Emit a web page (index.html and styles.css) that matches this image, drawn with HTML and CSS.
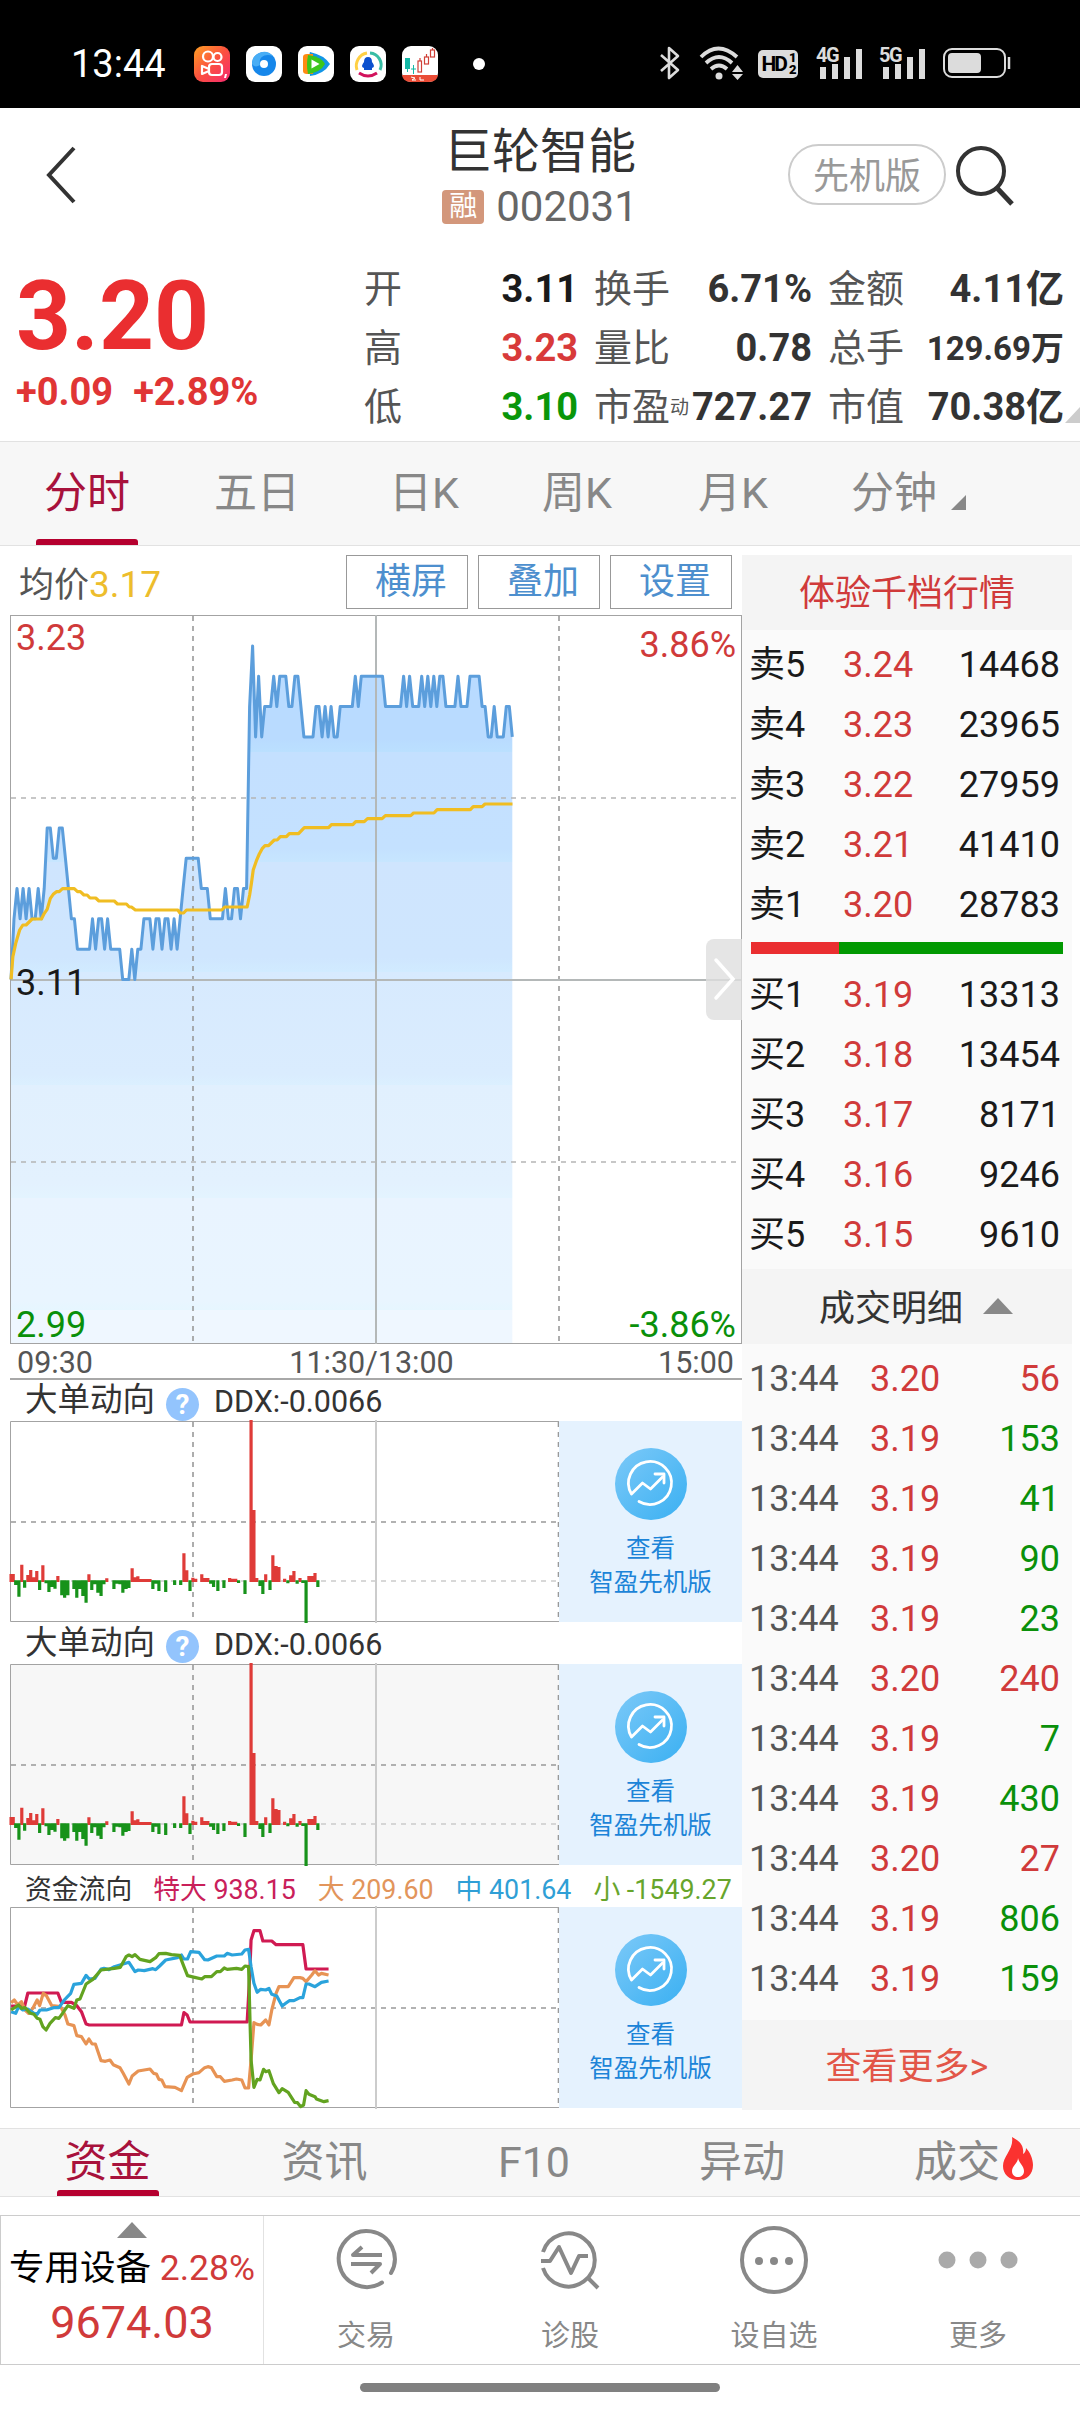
FILE: index.html
```html
<!DOCTYPE html>
<html lang="zh-CN">
<head>
  <meta charset="UTF-8" />
  <meta name="viewport" content="width=device-width, initial-scale=1.0"/>
  <title>巨轮智能 002031</title>
  <link rel="stylesheet" href="styles.css">
</head>
<body>
  <div class="statusbar">
    <span class="clock">13:44</span>
    <div class="apps">
      <svg viewBox="0 0 36 36"><defs><linearGradient id="ks" x1="0" y1="0" x2="1" y2="1"><stop offset="0" stop-color="#ffa023"/><stop offset=".5" stop-color="#fb5040"/><stop offset="1" stop-color="#f52a70"/></linearGradient></defs><rect width="36" height="36" rx="9" fill="url(#ks)"/><g fill="none" stroke="#fff" stroke-width="2.2"><circle cx="14" cy="10.500" r="5"/><circle cx="23.500" cy="11" r="4"/><rect x="15" y="18" width="13" height="11" rx="3"/><path d="M15 23l-7-3v8l7-3" stroke-linejoin="round"/></g><path d="M31 28l2 0-1 4h-2z" fill="#fff"/></svg>
      <svg viewBox="0 0 36 36"><rect width="36" height="36" rx="9" fill="#fff"/><circle cx="18" cy="18" r="12" fill="#1687ea"/><path d="M6 18a12 12 0 0 1 21-8c-9-3-15 2-13 9-3 2-6 2-8-1z" fill="#48adf5"/><circle cx="18" cy="18" r="4" fill="#fff"/></svg>
      <svg viewBox="0 0 36 36"><rect width="36" height="36" rx="9" fill="#fff"/><path d="M12 6q-1 0 0 24Q26 28 32 18 26 9 12 6z" fill="#1295e6"/><path d="M5 11q0-3 4-3h6v20H9q-4 0-4-3z" fill="#ff8a12"/><path d="M10 9q14 2 17 9-4 8-17 10-2-9 0-19z" fill="#3cc61c"/><path d="M13.500 13.500v9l8-4.500z" fill="#fff"/></svg>
      <svg viewBox="0 0 36 36"><rect width="36" height="36" rx="9" fill="#fff"/><g fill="none" stroke-width="3"><path d="M7 24a13 13 0 0 1 10-17" stroke="#ffd044"/><path d="M20 7a12 12 0 0 1 10 17" stroke="#38bda5"/><path d="M9 27q9 6 18 0" stroke="#d2125c"/></g><path d="M18 11q4 0 4 5 4 5 0 6v2h-8v-2q-4-1 0-6 0-5 4-5z" fill="#0c50ce"/></svg>
      <svg viewBox="0 0 36 36"><rect width="36" height="36" rx="9" fill="#fff"/><path d="M0 29h36q-1 7-9 7H9q-8 0-9-7z" fill="#ea4c36"/><rect x="3" y="12" width="5" height="11" fill="#14b8a6"/><path d="M5.500 23v3M11.500 19v9M9 23h5" stroke="#14b8a6" fill="none"/><g fill="#fff" stroke="#d04038" stroke-width="1.200"><path d="M18 12v3M24.500 8v3M30.500 2v2"/><rect x="16" y="15" width="3.500" height="11"/><rect x="22.500" y="11" width="4" height="7"/><rect x="28.500" y="4" width="4" height="7"/></g><path d="M9 31l4 1-3 2h4M18 31v3h4" stroke="#fff" fill="none"/></svg>
    </div>
    <i class="more-dot"></i>
    <div class="signals">
      <svg width="22" height="34" viewBox="0 0 22 34"><path d="M2 9l17 15-9 8V2l9 8L2 25" fill="none" stroke="#dcdcdc" stroke-width="2.600" stroke-linejoin="round"/></svg>
      <svg width="44" height="34" viewBox="0 0 44 34"><g fill="none" stroke="#dcdcdc" stroke-width="3.800"><path d="M2 11q17-17 36 0"/><path d="M7 17q13-12 26 0"/><path d="M12 23q8-7 16 0"/></g><circle cx="20" cy="30" r="3.500" fill="#dcdcdc"/><path d="M33 26l5.500-7 5.500 7zM33 28h11l-5.500 6z" fill="#dcdcdc"/></svg>
      <span class="hd">HD<small><b>1</b><b>2</b></small></span>
      <span class="cell"><em>4G</em><svg width="44" height="31" viewBox="0 0 44 31"><path d="M4 19v12M16 16v15M28 9v22M40 1v30" stroke="#dcdcdc" stroke-width="6"/></svg></span>
      <span class="cell"><em>5G</em><svg width="44" height="31" viewBox="0 0 44 31"><path d="M4 19v12M16 16v15M28 9v22M40 1v30" stroke="#dcdcdc" stroke-width="6"/></svg></span>
      <svg width="68" height="30" viewBox="0 0 68 30"><rect x="1" y="1" width="61" height="28" rx="8" fill="none" stroke="#dcdcdc" stroke-width="2"/><rect x="5" y="5" width="33" height="20" rx="4" fill="#dcdcdc"/><path d="M66 9v12" stroke="#dcdcdc" stroke-width="2.500"/></svg>
    </div>
  </div>

  <header class="navbar">
    <svg class="back" width="36" height="60" viewBox="0 0 36 60"><path d="M31 3L6 30l25 27" fill="none" stroke="#333" stroke-width="4"/></svg>
    <div class="name">
      <h1>巨轮智能</h1>
      <div class="code"><span class="rong">融</span>002031</div>
    </div>
    <div class="actions">
      <span class="pill">先机版</span>
      <svg width="60" height="64" viewBox="0 0 60 64"><circle cx="26" cy="27" r="23" fill="none" stroke="#333" stroke-width="4"/><path d="M42 44l15 16" stroke="#333" stroke-width="5"/></svg>
    </div>
  </header>

  <section class="quote">
    <div class="last">
      <div class="price">3.20</div>
      <div class="change"><span>+0.09</span><span>+2.89%</span></div>
    </div>
    <div class="stats">
      <div>开<b class="dark">3.11</b></div><div>换手<b>6.71%</b></div><div>金额<b>4.11亿</b></div>
      <div>高<b class="red">3.23</b></div><div>量比<b>0.78</b></div><div>总手<b class="small">129.69万</b></div>
      <div>低<b class="green">3.10</b></div><div>市盈<small>动</small><b>727.27</b></div><div>市值<b>70.38亿</b></div>
    </div>
    <i class="corner"></i>
  </section>

  <nav class="tabs period">
    <a class="active">分时</a><a>五日</a><a>日K</a><a>周K</a><a>月K</a><a class="minute">分钟<i></i></a>
  </nav>

  <main class="board">
    <div class="charts">
      <div class="toolbar">
        <span class="avg">均价<b>3.17</b></span>
        <button>横屏</button><button>叠加</button><button>设置</button>
      </div>

      <div class="main-chart">
        <svg width="732" height="729" viewBox="0 0 732 729">
          <defs>
            <linearGradient id="area" gradientUnits="userSpaceOnUse" x1="0" y1="0" x2="0" y2="729">
              <stop offset="0" stop-color="#b9dbff"/><stop offset=".17" stop-color="#b9dbff"/><stop offset=".188" stop-color="#bbe0ff"/>
              <stop offset=".188" stop-color="#c4e0ff"/><stop offset=".32" stop-color="#c4e1ff"/><stop offset=".339" stop-color="#c7e6ff"/>
              <stop offset=".339" stop-color="#cfe5fe"/><stop offset=".47" stop-color="#cfe6fe"/><stop offset=".49" stop-color="#d1ebff"/>
              <stop offset=".49" stop-color="#d7eafe"/><stop offset=".63" stop-color="#daecfe"/><stop offset=".645" stop-color="#dbf0ff"/>
              <stop offset=".645" stop-color="#e1f0fe"/><stop offset=".78" stop-color="#e3f1fe"/><stop offset=".80" stop-color="#e3f4ff"/>
              <stop offset=".80" stop-color="#e9f4ff"/><stop offset=".94" stop-color="#e9f5ff"/><stop offset=".953" stop-color="#e6f6ff"/>
              <stop offset=".953" stop-color="#eff7ff"/><stop offset="1" stop-color="#eff7ff"/>
            </linearGradient>
          </defs>
          <polygon id="priceArea" fill="url(#area)"/>
          <rect class="frame" x=".5" y=".5" width="731" height="728"/>
          <path class="dash" d="M183 1v727M549 1v727"/>
          <path class="dash light" d="M1 183h730M1 547h730"/>
          <path class="solid" d="M366 0v729M1 365h730"/>
          <polyline id="priceLine"/>
          <g transform="translate(-10 -75) scale(.35714 .33333)">
            <polyline class="line yellow" points="31,1318 36,1250 44,1210 55,1170 64,1155 73,1155 90,1137 116,1137 124,1120 132,1108 141,1075 149,1063 158,1055 166,1055 175,1046 208,1046 217,1055 225,1055 235,1065 244,1065 252,1074 268,1074 277,1083 320,1083 329,1092 354,1092 362,1101 368,1101 379,1110 498,1110 504,1119 514,1119 522,1110 621,1110 629,1101 692,1101 699,1065 704,1030 709,990 718,962 726,942 734,926 742,917 752,917 768,900 776,900 785,890 802,890 810,881 836,881 852,863 920,863 928,854 988,854 996,845 1020,845 1029,836 1070,836 1079,827 1150,827 1158,819 1215,819 1224,809 1317,809 1325,800 1350,800 1358,792 1435,792"/>
          </g>
        </svg>
        <span class="lbl high red">3.23</span><span class="lbl rise red">3.86%</span>
        <span class="lbl mid">3.11</span>
        <span class="lbl low green">2.99</span><span class="lbl fall green">-3.86%</span>
        <span class="handle"><svg width="24" height="44" viewBox="0 0 24 44"><path d="M3 3l17 19L3 41" fill="none" stroke="#fff" stroke-width="3.500" stroke-linecap="round"/></svg></span>
      </div>
      <div class="times"><span>09:30</span><span>11:30/13:00</span><span>15:00</span></div>

      <div class="sub-title big">大单动向<i class="help">?</i><span>DDX:-0.0066</span></div>
      <div class="sub">
        <svg width="549" height="201" viewBox="0 0 549 201">
          <defs>
            <g id="ddx" transform="translate(-10 -121) scale(.35714 .33333)">
              <path class="bar up" d="M31 846v-24M37 846v-24M61 846v-52M78 846v-21M86 846v-36M95 846v-14M103 846v-33M120 846v-50M162 846v-18M249 846v-23M299 846v-11M370 846v-41M378 846v-14M386 846v-17M395 846v-9M403 846v-9M412 846v-9M420 846v-9M515 846v-86M523 846v-35M540 846v-13M548 846v-10M565 846v-23M573 846v-12M582 846v-12M643 846v-12M651 846v-10M660 846v-10M703 846v-486M711 846v-216M719 846v-12M744 846v-23M764 846v-80M773 846v-48M781 846v-45M797 846v-10M814 846v-20M823 846v-33M840 846v-12M865 846v-18M873 846v-18M882 846v-27"/>
              <path class="bar down" d="M44 841v14M53 841v49M69 841v22M111 841v29M129 841v9M137 841v35M146 841v20M154 841v25M173 841v45M181 841v52M190 841v45M207 841v26M215 841v52M224 841v26M232 841v47M241 841v67M257 841v29M266 841v12M274 841v37M283 841v47M291 841v12M319 841v26M328 841v10M336 841v12M344 841v37M353 841v26M361 841v23M428 841v26M437 841v10M445 841v32M464 841v35M489 841v14M506 841v14M532 841v32M590 841v10M598 841v20M610 841v32M627 841v23M668 841v8M686 841v41M728 841v17M736 841v41M756 841v29M806 841v9M832 841v10M848 841v8M857 841v128M890 841v20"/>
            </g>
            <g id="grid">
              <path class="frame" d="M549 .5H.5v200H549"/>
              <path class="dash" d="M183 1v200M548.500 1v200M1 101h548"/>
              <path class="solid pale" d="M366 -1v203"/>
            </g>
          </defs>
          <use href="#grid"/><path class="dash pale" d="M1 160h548"/><use href="#ddx"/>
        </svg>
        <div class="promo"><svg width="72" height="72"><use href="#trend"/></svg><p>查看<br>智盈先机版</p></div>
      </div>

      <div class="sub-title big">大单动向<i class="help">?</i><span>DDX:-0.0066</span></div>
      <div class="sub shaded">
        <svg width="549" height="201" viewBox="0 0 549 201"><use href="#grid"/><path class="dash pale" d="M1 160h548"/><use href="#ddx"/></svg>
        <div class="promo"><svg width="72" height="72"><use href="#trend"/></svg><p>查看<br>智盈先机版</p></div>
      </div>

      <div class="sub-title flow">资金流向<span class="xl">特大 938.15</span><span class="l">大 209.60</span><span class="m">中 401.64</span><span class="s">小 -1549.27</span></div>
      <div class="sub">
        <svg width="549" height="201" viewBox="0 0 549 201">
          <use href="#grid"/>
          <g transform="translate(-10 -47) scale(.35714 .33333)">
            <polyline class="line xl" points="31,438 69,438 78,399 162,399 172,427 200,427 215,437 228,455 241,492 250,495 508,495 515,458 524,465 532,486 692,486 699,350 703,240 711,212 728,212 736,243 761,243 773,254 848,254 857,327 920,327"/>
            <polyline class="line l" points="31,428 40,420 50,435 60,425 70,450 80,460 92,445 104,420 111,437 121,400 130,407 145,437 170,440 182,465 190,492 207,497 215,527 228,530 241,552 249,537 258,552 267,552 283,602 295,604 308,600 317,614 336,623 345,640 361,672 370,648 387,633 420,627 430,640 438,642 445,658 453,660 462,680 490,682 508,692 524,652 540,642 557,638 573,623 582,620 592,623 607,650 617,650 628,664 650,660 662,657 677,660 686,684 696,684 703,600 711,488 720,493 730,495 744,480 753,495 761,450 773,400 781,380 807,380 823,353 840,353 848,355 857,365 873,345 882,332 892,345 900,340 920,345"/>
            <polyline class="line m" points="31,455 44,460 52,440 64,450 78,447 95,460 104,463 112,450 130,450 150,443 165,443 180,420 198,400 207,373 228,370 241,346 250,357 266,355 283,327 291,325 305,329 320,320 361,307 378,335 387,330 404,332 428,326 436,329 447,318 464,300 497,293 508,285 515,297 525,297 534,275 557,277 573,299 582,300 607,288 628,288 636,280 650,285 677,282 686,270 696,268 703,320 711,370 720,397 730,388 744,390 753,385 761,403 775,408 790,438 800,430 810,422 823,422 840,413 848,413 857,372 865,372 882,380 900,367 920,363"/>
            <polyline class="line s" points="31,450 52,435 60,445 70,443 85,460 95,463 104,475 112,478 120,500 129,510 140,490 155,473 165,475 175,460 190,437 207,445 215,420 224,417 241,372 260,358 283,330 320,325 337,322 353,290 361,285 370,290 378,284 392,298 420,305 436,293 445,281 464,280 480,284 503,286 515,320 525,347 545,352 565,357 573,350 592,350 607,335 617,335 628,324 636,328 662,325 677,328 686,318 696,320 703,600 711,682 720,658 728,660 738,628 744,635 753,632 765,670 781,698 790,686 807,697 825,727 833,728 842,740 850,735 857,692 865,703 882,710 886,717 907,725 920,722"/>
          </g>
        </svg>
        <div class="promo"><svg width="72" height="72"><defs><linearGradient id="sky" x1="0" y1="0" x2="1" y2="1"><stop offset="0" stop-color="#7cc9f8"/><stop offset="1" stop-color="#3ab0f2"/></linearGradient><g id="trend"><circle cx="36" cy="36" r="36" fill="url(#sky)"/><g fill="none" stroke="#fff" stroke-width="2.800" stroke-linecap="round" stroke-linejoin="round"><path d="M24 53.500a21.500 21.500 0 1 0-7.500-7.500l11-11 8 6 12-12"/><path d="M40 26h9v9"/></g></g></defs><use href="#trend"/></svg><p>查看<br>智盈先机版</p></div>
      </div>
    </div>

    <aside class="depth">
      <div class="bar-title hot">体验千档行情</div>
      <div class="orders">
        <div><span>卖5</span><b>3.24</b><em>14468</em></div>
        <div><span>卖4</span><b>3.23</b><em>23965</em></div>
        <div><span>卖3</span><b>3.22</b><em>27959</em></div>
        <div><span>卖2</span><b>3.21</b><em>41410</em></div>
        <div><span>卖1</span><b>3.20</b><em>28783</em></div>
        <div class="ratio"><i></i></div>
        <div><span>买1</span><b>3.19</b><em>13313</em></div>
        <div><span>买2</span><b>3.18</b><em>13454</em></div>
        <div><span>买3</span><b>3.17</b><em>8171</em></div>
        <div><span>买4</span><b>3.16</b><em>9246</em></div>
        <div><span>买5</span><b>3.15</b><em>9610</em></div>
      </div>
      <div class="bar-title detail">成交明细<i class="tri"></i></div>
      <div class="orders trades">
        <div><span>13:44</span><b>3.20</b><em class="red">56</em></div>
        <div><span>13:44</span><b>3.19</b><em class="green">153</em></div>
        <div><span>13:44</span><b>3.19</b><em class="green">41</em></div>
        <div><span>13:44</span><b>3.19</b><em class="green">90</em></div>
        <div><span>13:44</span><b>3.19</b><em class="green">23</em></div>
        <div><span>13:44</span><b>3.20</b><em class="red">240</em></div>
        <div><span>13:44</span><b>3.19</b><em class="green">7</em></div>
        <div><span>13:44</span><b>3.19</b><em class="green">430</em></div>
        <div><span>13:44</span><b>3.20</b><em class="red">27</em></div>
        <div><span>13:44</span><b>3.19</b><em class="green">806</em></div>
        <div><span>13:44</span><b>3.19</b><em class="green">159</em></div>
      </div>
      <div class="bar-title more">查看更多&gt;</div>
    </aside>
  </main>

  <nav class="tabs info">
    <a class="active">资金</a><a>资讯</a><a>F10</a><a>异动</a>
    <a class="deal">成交<svg width="30" height="43" viewBox="0 0 30 43"><path d="M9 0c10 5 12 11 11 17q3-2 3-6c4 4 7 11 7 17 0 9-6 15-15 15S0 37 0 29C0 19 11 12 9 0z" fill="#fb3230"/><path d="M15 21c1 5 6 8 6 13 0 4-3 6-6 6s-6-2-6-6c0-5 6-8 6-13z" fill="#fff"/></svg></a>
  </nav>

  <footer class="bottom">
    <div class="sector">
      <i class="tri"></i>
      <div class="sector-name">专用设备 <span>2.28%</span></div>
      <div class="sector-value">9674.03</div>
    </div>
    <a><svg viewBox="0 0 72 72"><g fill="none" stroke="#888" stroke-width="4"><path d="M52 58.500A28 28 0 1 1 61 49" stroke-linecap="round"/><path d="M52 31H23l9-8M21 40h29l-9 9" stroke-linejoin="round"/></g></svg>交易</a>
    <a><svg viewBox="0 0 72 72"><g fill="none" stroke="#888" stroke-width="4"><path d="M9 28a26.500 26.500 0 1 1 0 16"/><path d="M7 37h9l9-14 12 26 8-17h9M53 53l11 11" stroke-linejoin="round"/></g></svg>诊股</a>
    <a><svg viewBox="0 0 72 72"><circle cx="36" cy="36" r="32" fill="none" stroke="#888" stroke-width="4"/><g fill="#888"><circle cx="21" cy="37" r="4"/><circle cx="36" cy="37" r="4"/><circle cx="51" cy="37" r="4"/></g></svg>设自选</a>
    <a><svg class="wide" viewBox="0 0 84 72"><g fill="#aaa"><circle cx="11" cy="36" r="8.500"/><circle cx="42" cy="36" r="8.500"/><circle cx="73" cy="36" r="8.500"/></g></svg>更多</a>
  </footer>
  <div class="home"></div>

  <script>
    // minute prices since 09:30, in cents above 3.00
    const prices = [
      11,13,14,13,14,13,14,13,13,14,13,14,16,16,15,15,16,16,15,14,13,13,12,12,12,12,12,13,12,13,13,12,13,
      12,12,12,12,11,11,11,12,11,12,12,13,13,13,12,13,13,12,13,13,12,13,12,13,14,15,15,15,15,15,14,14,14,
      13,13,13,13,13,14,13,13,14,14,13,14,14,20,22,19,21,19,20,20,20,21,20,21,21,21,20,20,21,21,20,
      19,19,19,19,20,20,19,20,19,20,19,19,20,20,20,20,20,21,20,21,21,21,21,21,21,21,21,20,20,20,20,20,20,
      21,20,21,20,20,20,21,20,21,20,21,20,21,21,20,20,20,20,21,20,20,20,21,21,21,21,20,20,19,19,20,19,19,19,20,20,19
    ];
    const pts = prices.map((p, i) => `${(1 + i * 3.02).toFixed(1)},${(364.5 - (p - 11) * 30.33).toFixed(1)}`).join(' ');
    document.getElementById('priceLine').setAttribute('points', pts);
    document.getElementById('priceArea').setAttribute('points', `1,728 ${pts} ${1 + (prices.length - 1) * 3.02},728`);
  </script>
</body>
</html>
```
FILE: styles.css
```css
* { box-sizing: border-box; }
body { margin: 0; width: 1080px; height: 2412px; overflow: hidden; background: #fff; color: #555; font-family: Roboto, 'Noto Sans CJK SC', sans-serif; }
svg { display: block; flex: none; overflow: visible; }
i, em { font-style: normal; }
.red { color: #d03a3a; }
.green { color: #0a900a; }

.statusbar { display: flex; align-items: center; height: 108px; padding: 19px 70px 0 71px; background: #000; color: #fff; }
.clock { width: 123px; font-size: 38px; line-height: 44px; }
.apps { display: flex; gap: 16px; }
.apps svg { width: 36px; height: 36px; }
.more-dot { width: 12px; height: 12px; margin-left: 35px; border-radius: 50%; background: #fff; }
.signals { display: flex; align-items: center; margin: -1px -1px 0 auto; color: #dcdcdc; }
.hd { display: flex; align-items: center; justify-content: center; width: 40px; height: 28px; margin: 2px 19px 0 15px; border-radius: 5px; background: #dcdcdc; color: #000; font: bold 21px/29px Roboto, sans-serif; letter-spacing: -2px; }
.hd small { display: flex; flex-direction: column; margin-left: 3px; font-size: 13px; line-height: 12px; }
.signals > svg:first-child { margin-right: 18px; }
.cell { position: relative; width: 46px; height: 33px; padding: 1px 0 0 2px; margin-right: 17px; }
.cell em { position: absolute; left: -1px; top: -1px; padding: 0 2px 0 0; background: #000; color: #dcdcdc; font: bold 20px/18px Roboto, sans-serif; letter-spacing: -1.5px; }

.navbar { display: grid; grid-template-columns: 1fr auto 1fr; height: 132px; }
.back { margin: 37px 0 0 43px; }
.name { text-align: center; }
h1 { margin: 16px 0 0; color: #333; font-size: 48px; font-weight: 400; line-height: 56px; }
.code { display: flex; align-items: center; justify-content: center; gap: 12px; height: 54px; color: #666; font-size: 42px; line-height: 54px; }
.rong { width: 42px; height: 34px; border-radius: 4px; background: #d3977b; color: #fff; font-size: 28px; line-height: 34px; }
.actions { display: flex; justify-content: flex-end; padding: 36px 65px 0 0; gap: 9px; }
.pill { width: 158px; height: 61px; border: 2px solid #ccc; border-radius: 31px; color: #999; font-size: 36px; line-height: 62px; text-align: center; }

.quote { position: relative; display: flex; height: 201px; }
.last { width: 364px; padding: 24px 0 0 16px; color: #ea2e30; font-weight: 700; }
.price { font-size: 96px; line-height: 104px; }
.change { display: flex; gap: 20px; margin-top: 1px; color: #e03535; font-size: 38px; line-height: 46px; }
.stats { display: grid; grid-template-columns: 214px 218px 236px; grid-auto-rows: 59px; column-gap: 16px; padding-top: 20px; font-size: 38px; line-height: 59px; }
.stats div { display: flex; white-space: nowrap; }
.stats b { margin-left: auto; color: #333; font-weight: 700; }
.stats b.dark { color: #1a1a1a; }
.stats b.red { color: #d83a3a; }
.stats b.green { color: #0a960a; }
.stats b.small { font-size: 33px; }
.stats small { font-size: 19px; }
.corner { position: absolute; right: 0; bottom: 18px; border-left: 15px solid transparent; border-bottom: 16px solid #ccc; }

.tabs { display: grid; border: solid #e2e2e2; border-width: 1px 0; background: #f7f7f7; color: #888; font-size: 43px; text-align: center; }
.tabs a { position: relative; }
.tabs .active { color: #a8123c; }
.tabs .active::after { content: ''; position: absolute; left: 50%; bottom: 0; width: 102px; height: 6px; margin-left: -51px; border-radius: 3px 3px 0 0; background: #b5002f; }
.period { grid-template-columns: 174px 166px 168px 138px 174px 260px; height: 105px; line-height: 103px; }
.minute { display: flex; padding-left: 31px; }
.minute i { margin: 53px 0 0 14px; height: 0; border-left: 15px solid transparent; border-bottom: 15px solid #888; }

.board { display: flex; height: 1582px; }
.charts { width: 742px; padding: 9px 0 0 10px; }
.toolbar { display: flex; gap: 10px; height: 60px; }
.avg { width: 326px; padding-left: 9px; color: #555; font-size: 35px; line-height: 60px; }
.avg b { color: #edbd2c; font-weight: 400; font-size: 37px; }
.toolbar button { width: 122px; height: 54px; padding: 0 0 0 8px; border: 1px solid #999; background: #fff; color: #4d8fce; font: 36px/52px Roboto, 'Noto Sans CJK SC', sans-serif; }
.main-chart { position: relative; height: 729px; }
.frame { fill: none; stroke: #a3a3a3; }
.dash { fill: none; stroke: #999; stroke-width: 1.6; stroke-dasharray: 5 5; }
.dash.light { stroke: #b5b5b5; }
.dash.pale { stroke: #ccc; }
.solid { fill: none; stroke: #b4b8b8; stroke-width: 2; }
.solid.pale { stroke: #ccc; }
#priceLine { fill: none; stroke: #5c9edc; stroke-width: 3; stroke-linejoin: round; }
.line { fill: none; stroke-width: 3.2; stroke-linejoin: round; vector-effect: non-scaling-stroke; }
.line.yellow { stroke: #f0bd22; }
.lbl { position: absolute; font-size: 36px; line-height: 42px; }
.high { left: 6px; top: 2px; }
.rise { right: 6px; top: 9px; }
.mid { left: 6px; top: 347px; color: #1a1a1a; }
.low { left: 6px; bottom: -2px; }
.fall { right: 6px; bottom: -2px; }
.handle { position: absolute; right: 0; top: 324px; width: 36px; height: 81px; padding: 18px 0 0 7px; border-radius: 8px 0 0 8px; background: rgba(222, 222, 222, .8); }
.times { display: flex; justify-content: space-between; height: 36px; padding: 0 8px 0 7px; border-bottom: 2px solid #a8a8a8; font-size: 30.500px; line-height: 38px; }
.times span:nth-child(2) { margin-left: -8px; }

.sub-title { display: flex; align-items: center; height: 42px; padding-left: 15px; color: #333; white-space: nowrap; }
.big { font-size: 32.500px; line-height: 45px; }
.big span { font-size: 30.500px; padding-top: 2px; }
.help { width: 33px; height: 33px; margin: 7px 15px 0 11px; border-radius: 50%; background: #93c4fd; color: #fff; font-size: 28px; font-weight: 700; line-height: 34px; text-align: center; }
.times + .sub-title { height: 41px; }
.flow { padding-top: 7px; font-size: 26.800px; line-height: 34px; }
.flow .xl { margin-left: 21px; color: #c9205a; }
.flow .l { margin-left: 22px; color: #e2955b; }
.flow .m { margin-left: 22px; color: #2f9fd6; }
.flow .s { margin-left: 22px; color: #67a52c; }
.sub { display: flex; height: 201px; }
.shaded { background: #f7f7f7; }
.bar { stroke-width: 3.200; vector-effect: non-scaling-stroke; }
.up { stroke: #df3b38; }
.down { stroke: #17921a; }
.line.xl { stroke: #d01a52; }
.line.l { stroke: #e79354; }
.line.m { stroke: #2aa3dc; }
.line.s { stroke: #62a320; }
.promo { flex: 1; padding-top: 27px; background: #e5f2fe; color: #1c84d8; }
.promo svg { margin: 0 auto; }
.promo p { margin: 12px 0 0; font-size: 24.500px; line-height: 34px; text-align: center; }

.depth { width: 330px; margin-top: 9px; color: #1a1a1a; background: #fafafa; height: 1555px; }
.bar-title { display: flex; align-items: center; justify-content: center; height: 75px; padding-top: 3px; background: #f4f4f4; color: #333; font-size: 36px; line-height: 72px; }
.hot { color: #d03a3a; }
.detail { gap: 20px; padding: 4px 0 0 18px; }
.detail .tri { margin-top: -5px; }
.tri { border: 15px solid transparent; border-top: 0; border-bottom: 16px solid #888; }
.more { height: 90px; color: #e25648; }
.orders { height: 639px; padding: 4px 9px 0; font-size: 36px; }
.orders > div { display: flex; height: 60px; line-height: 62px; }
.orders span { width: 94px; margin-left: -2px; }
.orders b { color: #d03a3a; font-weight: 400; }
.orders em { margin-left: auto; padding-right: 3px; }
.orders .ratio { height: 12px; margin: 8px 0 10px; background: #019901; }
.ratio i { width: 88px; background: #ea2e30; }
.trades { height: 676px; }
.trades span { width: 121px; color: #555; }

.info { grid-template-columns: 215px 219px 200px 216px 230px; height: 69px; line-height: 67px; }
.deal { display: flex; padding-left: 64px; }
.deal svg { margin: 8px 0 0 3px; }
.bottom { display: grid; grid-template-columns: 263px repeat(4, 204px); height: 150px; margin-top: 18px; border: solid #ccc; border-width: 1px 0 1px 1px; color: #888; font-size: 29px; line-height: 40px; text-align: center; }
.bottom a { padding-top: 8px; }
.bottom a svg { width: 72px; height: 72px; margin: 0 auto 20px; }
.bottom a svg.wide { width: 84px; }
.sector { display: flex; flex-direction: column; align-items: center; padding-top: 6px; border-right: 1px solid #e2e2e2; color: #000; }
.sector-name { margin-top: 6px; font-size: 35.500px; line-height: 48px; white-space: nowrap; }
.sector-name span, .sector-value { color: #d03a3a; }
.sector-value { margin-top: 6px; font-size: 45px; line-height: 50px; }
.home { width: 360px; height: 9px; margin: 18px auto 0; border-radius: 5px; background: #808080; }
```
